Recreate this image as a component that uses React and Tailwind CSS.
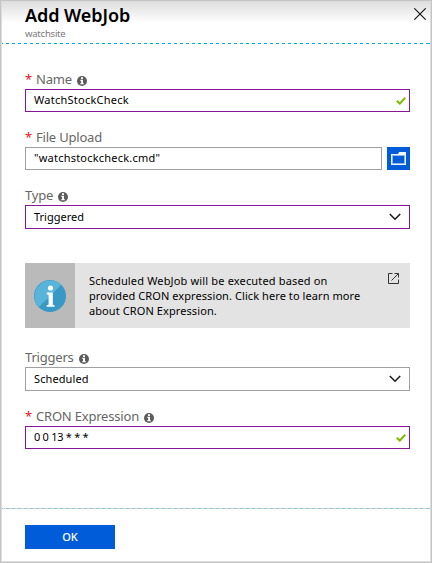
const InfoDot = () => (
  <svg className="mt-[5px] ml-[5px] shrink-0" width="10" height="10" viewBox="0 0 10 10">
    <circle cx="5" cy="5" r="5" fill="#5c5c5c" />
    <path d="M4 1.3h2v1.6H4zM3.3 3.8H6v3.4h.9v1.1H3.2V7.2h.9V4.9h-.8z" fill="#fff" />
  </svg>
);

const Check = () => (
  <svg width="10" height="8" viewBox="0 0 10 8">
    <path d="M0.8 3.8 L3.8 6.6 L9.2 0.8" fill="none" stroke="#7fba00" strokeWidth="2" />
  </svg>
);

const Chevron = () => (
  <svg width="12" height="8" viewBox="0 0 12 8">
    <path d="M0.8 1 L6 6.2 L11.2 1" fill="none" stroke="#1c1c1c" strokeWidth="1.6" />
  </svg>
);

const Label = ({ children, required, info }) => (
  <div className="flex h-[18px] items-start text-[13px] leading-[17px] tracking-[-0.2px] text-[#666]">
    {required && <span className="w-[11px] shrink-0 text-[#e81123]">*</span>}
    <span className="whitespace-nowrap">{children}</span>
    {info && <InfoDot />}
  </div>
);

export default function App() {
  return (
    <div className="flex h-[563px] w-[432px] flex-col border border-[#c4c4c4] bg-white font-['Noto_Sans',sans-serif]">
      <div className="flex min-h-0 flex-1 flex-col border border-[#dcdcdc]">
        <header className="flex h-[41px] shrink-0 justify-between bg-linear-to-b from-[#dfdfdf] to-white to-[21px] pr-[4px] pl-[23px]">
          <div>
            <h1 className="mt-px text-[18px] leading-[24px] font-semibold tracking-[-0.05px] text-black">Add WebJob</h1>
            <p className="mt-px text-[9.5px] leading-[12px] tracking-[-0.22px] text-[#7a7a7a]">watchsite</p>
          </div>
          <svg className="mt-[6px]" width="12" height="12" viewBox="0 0 12 12">
            <path d="M0.3 0.3 L11.7 11.7 M11.7 0.3 L0.3 11.7" stroke="#111" strokeWidth="1.1" />
          </svg>
        </header>
        <div className="h-px shrink-0 bg-[repeating-linear-gradient(90deg,#00abec_0px,#00abec_3px,#fff_3px,#fff_6px)] bg-position-[-2px_0]" />

        <main className="flex h-[464px] shrink-0 flex-col pr-[20px] pl-[23px] text-[11px] text-black">
          <div className="mt-[27px]">
            <Label required info>Name</Label>
          </div>
          <div className="flex h-[23px] items-center justify-between border border-[#881798] pr-[3px] pl-[8px]">
            <span className="tracking-[0.25px]">WatchStockCheck</span>
            <Check />
          </div>

          <div className="mt-[17px]">
            <Label required>File Upload</Label>
          </div>
          <div className="flex gap-[5px]">
            <div className="flex h-[23px] flex-1 items-center border border-[#a0a0a0] pl-[8px] tracking-[0.22px]">"watchstockcheck.cmd"</div>
            <div className="flex h-[23px] w-[23px] items-center justify-center bg-[#015cda]">
              <svg width="15" height="13" viewBox="0 0 15 13">
                <path d="M0 2h7l1.2-2H15v13H0z" fill="#f2f7ff" />
                <path d="M1.5 3.5h12v8h-12z" fill="#015cda" stroke="#8db8f0" strokeWidth="0.8" />
              </svg>
            </div>
          </div>

          <div className="mt-[17px]">
            <Label info>Type</Label>
          </div>
          <div className="flex h-[24px] items-center justify-between border border-[#881798] pr-[8px] pl-[8px]">
            <span>Triggered</span>
            <Chevron />
          </div>

          <div className="mt-[34px] flex h-[65px] shrink-0 bg-[#e3e3e3]">
            <div className="flex w-[50px] items-center justify-center bg-[#bababa]">
              <svg width="32" height="32" viewBox="0 0 32 32">
                <circle cx="16" cy="16" r="16" fill="#3999c6" />
                <path d="M4.7 27.3A16 16 0 0 1 27.3 4.7z" fill="#59b4d9" />
                <circle cx="16.5" cy="8" r="2.6" fill="#fff" />
                <path d="M12.8 12.5h6v12.2l1.7.5v1.6h-7.8v-1.6l1.9-.5V14.7l-1.8-.5z" fill="#fff" />
              </svg>
            </div>
            <p className="mt-[10px] ml-[14px] flex-1 leading-[15px] whitespace-nowrap">
              <span className="tracking-[0.16px]">Scheduled WebJob will be executed based on</span>
              <br />
              <span className="tracking-[0.08px]">provided CRON expression. Click here to learn more</span>
              <br />
              <span className="tracking-[0.09px]">about CRON Expression.</span>
            </p>
            <svg className="mt-[10px] mr-[11px]" width="11" height="11" viewBox="0 0 11 11">
              <path d="M4.5 .5h-4v10h10v-4M6.5 .5h4v4M10.5 .5l-7 7" fill="none" stroke="#333" strokeWidth="1" />
            </svg>
          </div>

          <div className="mt-[21px]">
            <Label info>Triggers</Label>
          </div>
          <div className="flex h-[24px] items-center justify-between border border-[#a0a0a0] pr-[8px] pl-[8px]">
            <span className="tracking-[0.1px]">Scheduled</span>
            <Chevron />
          </div>

          <div className="mt-[17px]">
            <Label required info>CRON Expression</Label>
          </div>
          <div className="flex h-[23px] items-center justify-between border border-[#881798] pr-[3px] pl-[8px]">
            <span className="tracking-[-0.27px]">0 0 13 * * *</span>
            <Check />
          </div>
        </main>

        <div className="h-px shrink-0 bg-[repeating-linear-gradient(90deg,#8cc6dc_0px,#8cc6dc_3px,#d2d2d2_3px,#d2d2d2_6px)] bg-position-[-2px_0]" />
        <footer className="pt-[16px] pl-[23px]">
          <button className="flex h-[24px] w-[90px] items-center justify-center bg-[#015cda] text-[11px] font-medium text-white">OK</button>
        </footer>
      </div>
    </div>
  );
}
